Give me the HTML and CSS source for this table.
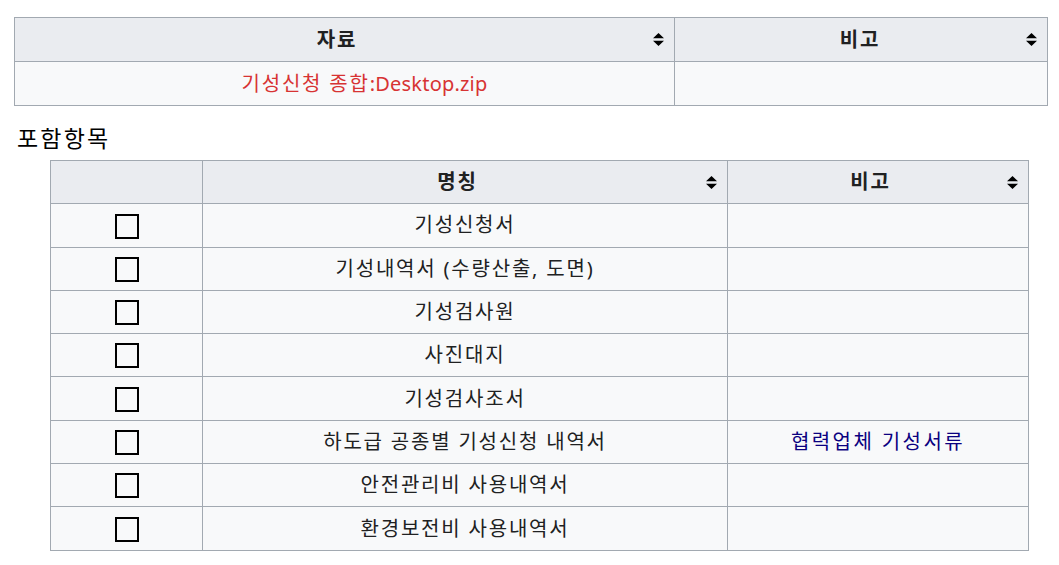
FILE: index.html
```html
<!DOCTYPE html>
<html lang="ko">
<head>
<meta charset="utf-8">
<link rel="stylesheet" href="styles.css">
</head>
<body>
<table class="wikitable t1">
  <thead>
    <tr>
      <th class="sortable c-file"><div class="th-in"><span class="lbl">자료</span><svg class="sort" viewBox="0 0 11 13" width="11" height="13"><path d="M5.5 0L11 5.2H0Z M5.5 13L11 7.8H0Z" fill="#000"/></svg></div></th>
      <th class="sortable even"><div class="th-in"><span class="lbl">비고</span><svg class="sort" viewBox="0 0 11 13" width="11" height="13"><path d="M5.5 0L11 5.2H0Z M5.5 13L11 7.8H0Z" fill="#000"/></svg></div></th>
    </tr>
  </thead>
  <tbody>
    <tr>
      <td class="file-cell"><a class="redlink">기성신청 종합<span class="latin">:Desktop.zip</span></a></td>
      <td></td>
    </tr>
  </tbody>
</table>

<p class="section">포함항목</p>

<table class="wikitable t2">
  <thead>
    <tr>
      <th class="c-check"></th>
      <th class="sortable c-name"><div class="th-in"><span class="lbl">명칭</span><svg class="sort" viewBox="0 0 11 13" width="11" height="13"><path d="M5.5 0L11 5.2H0Z M5.5 13L11 7.8H0Z" fill="#000"/></svg></div></th>
      <th class="sortable"><div class="th-in"><span class="lbl">비고</span><svg class="sort" viewBox="0 0 11 13" width="11" height="13"><path d="M5.5 0L11 5.2H0Z M5.5 13L11 7.8H0Z" fill="#000"/></svg></div></th>
    </tr>
  </thead>
  <tbody>
    <tr><td><span class="box"></span></td><td>기성신청서</td><td></td></tr>
    <tr><td><span class="box"></span></td><td>기성내역서 (수량산출, 도면)</td><td></td></tr>
    <tr><td><span class="box"></span></td><td>기성검사원</td><td></td></tr>
    <tr><td><span class="box"></span></td><td>사진대지</td><td></td></tr>
    <tr><td><span class="box"></span></td><td>기성검사조서</td><td></td></tr>
    <tr><td><span class="box"></span></td><td>하도급 공종별 기성신청 내역서</td><td><a class="visited">협력업체 기성서류</a></td></tr>
    <tr><td><span class="box"></span></td><td>안전관리비 사용내역서</td><td></td></tr>
    <tr><td><span class="box"></span></td><td>환경보전비 사용내역서</td><td></td></tr>
  </tbody>
</table>
</body>
</html>
```

FILE: styles.css
```css
html, body {
  margin: 0;
  padding: 0;
  background: #ffffff;
}

body {
  padding: 17px 0 0 14px;
  font-family: "Noto Sans", "Noto Sans CJK KR", sans-serif;
  font-size: 20px;
  letter-spacing: 1.8px;
  color: #202122;
}

.wikitable {
  border-collapse: collapse;
  border: 1px solid #a2a9b1;
  background: #f8f9fa;
  color: #202122;
  table-layout: fixed;
}

.wikitable th,
.wikitable td {
  border: 1px solid #a2a9b1;
  padding: 6px 8px;
  line-height: 30px;
  text-align: center;
  vertical-align: middle;
}

.wikitable th {
  background: #eaecf0;
  font-weight: bold;
}

.t1 {
  width: 1034px;
}

.t1 .c-file {
  width: 643px;
}

.t1 th,
.t1 td {
  height: 31px;
}

.t1 .file-cell {
  padding-left: 48px;
}

.th-in {
  display: flex;
  align-items: center;
}

.th-in .lbl {
  flex: 1;
  text-align: center;
}

.th-in .sort {
  flex: none;
  margin-left: 2px;
  margin-right: 2px;
}

.even .th-in {
  padding-left: 13px;
}

.redlink {
  color: #d73333;
}

.latin {
  letter-spacing: 0.2px;
}

.visited {
  color: #0b0080;
  letter-spacing: 2.4px;
}

.section {
  margin: 16px 0 5px 3px;
  font-size: 23px;
  letter-spacing: 2.2px;
  line-height: 33px;
  color: #000;
}

.t2 {
  margin-left: 36px;
  width: 979px;
}

.t2 .c-check {
  width: 135px;
}

.t2 .c-name {
  width: 508px;
}

.t2 th,
.t2 td {
  height: 30.3px;
}

.box {
  display: inline-block;
  width: 20px;
  height: 21px;
  border: 2px solid #000;
  vertical-align: middle;
  position: relative;
  top: -1px;
}
```
